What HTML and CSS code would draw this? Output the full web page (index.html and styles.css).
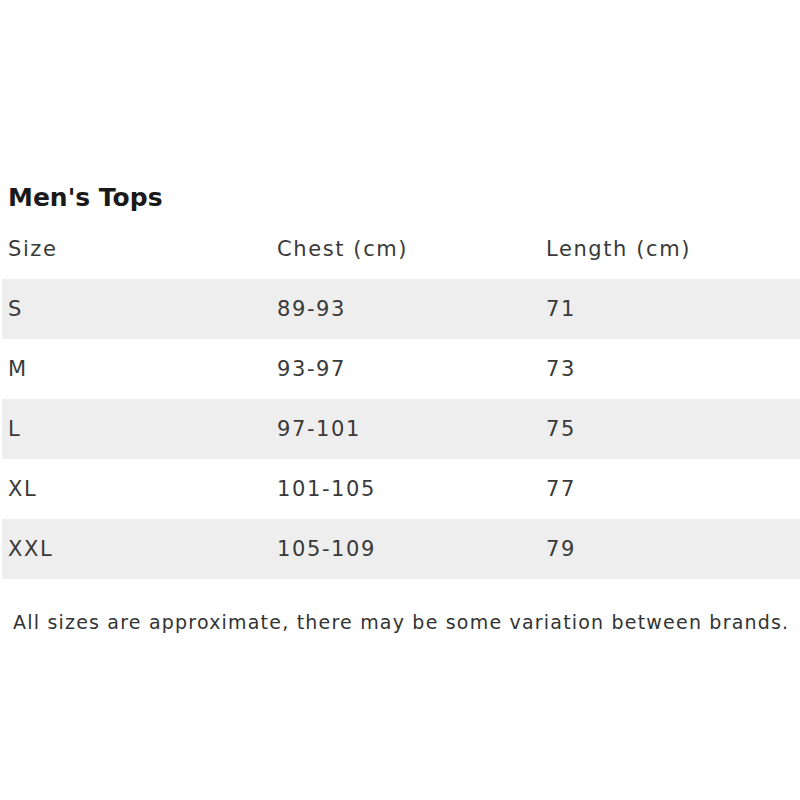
FILE: index.html
```html
<!DOCTYPE html>
<html>
<head>
<meta charset="utf-8">
<link rel="stylesheet" href="styles.css">
</head>
<body>
<div class="page">
  <h2 class="title">Men's Tops</h2>
  <div class="table">
    <div class="row head"><span>Size</span><span>Chest (cm)</span><span>Length (cm)</span></div>
    <div class="row alt"><span>S</span><span>89-93</span><span>71</span></div>
    <div class="row"><span>M</span><span>93-97</span><span>73</span></div>
    <div class="row alt"><span>L</span><span>97-101</span><span>75</span></div>
    <div class="row"><span>XL</span><span>101-105</span><span>77</span></div>
    <div class="row alt"><span>XXL</span><span>105-109</span><span>79</span></div>
  </div>
  <p class="note">All sizes are approximate, there may be some variation between brands.</p>
</div>
</body>
</html>
```
FILE: styles.css
```css
html, body { margin: 0; background: #fff; }
body { font-family: "DejaVu Sans", sans-serif; color: #333; overflow: hidden; }
.page { padding: 177px 0 0 2px; }
.title { margin: 0 0 0 6px; font-size: 25px; font-weight: 600; color: #1a1a1a; line-height: 42px; height: 42px; }
.table { width: 807px; }
.row { display: grid; grid-template-columns: 269px 269px 269px; height: 60px; align-items: center; font-size: 21px; letter-spacing: 1.6px; color: #3a3a3a; }
.row span { padding-left: 6px; }
.row.alt { background: #eeeeee; }
.note { margin: 32px 0 0 11px; font-size: 19px; letter-spacing: 1.2px; color: #333; white-space: nowrap; }
```
